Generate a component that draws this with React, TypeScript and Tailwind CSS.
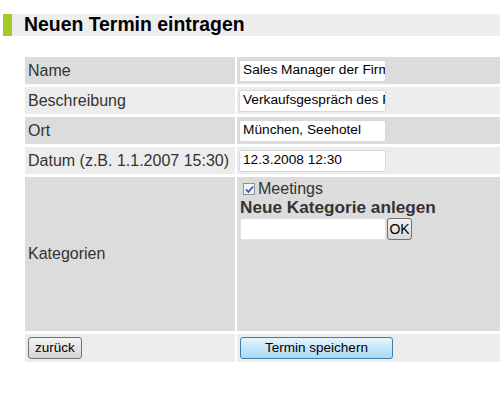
import React from "react";

const label = "flex items-center pl-[3px] text-[16px] text-[#333333] [font-family:'Liberation_Sans',Arial,sans-serif] whitespace-nowrap";
const inputCls = "w-[147px] h-[22px] bg-white border border-[#d8d8d8] rounded-[2px] px-[3px] text-[13.7px] text-black [font-family:'Liberation_Sans',Arial,sans-serif] flex items-center overflow-hidden whitespace-nowrap";

function Input({ value }: { value: string }) {
  return <div className={inputCls}>{value}</div>;
}

export default function App() {
  return (
    <div className="w-[500px] h-[400px] bg-white overflow-hidden relative">
      <div className="mt-[14px] ml-[3px] flex h-[22px]">
        <div className="w-[9px] bg-[#a5c927]" />
        <div className="flex-1 bg-[#eeeeee] flex items-center pl-[12px] text-[19.4px] font-bold text-black [font-family:'Liberation_Sans',Arial,sans-serif]">
          Neuen Termin eintragen
        </div>
      </div>
      <div className="ml-[25px] mt-[21px] grid grid-cols-[210px_1fr] gap-x-[2px] gap-y-[3px]">
        <div className={`${label} h-[27px] bg-[#dcdcdc]`}>Name</div>
        <div className="h-[27px] bg-[#dcdcdc] flex items-center pl-[2px]"><Input value="Sales Manager der Firma" /></div>
        <div className={`${label} h-[27px] bg-[#ececec]`}>Beschreibung</div>
        <div className="h-[27px] bg-[#ececec] flex items-center pl-[2px]"><Input value="Verkaufsgespräch des Projekts" /></div>
        <div className={`${label} h-[27px] bg-[#dcdcdc]`}>Ort</div>
        <div className="h-[27px] bg-[#dcdcdc] flex items-center pl-[2px]"><Input value="München, Seehotel" /></div>
        <div className={`${label} h-[27px] bg-[#ececec]`}>Datum (z.B. 1.1.2007 15:30)</div>
        <div className="h-[27px] bg-[#ececec] flex items-center pl-[2px]"><Input value="12.3.2008 12:30" /></div>
        <div className={`${label} h-[154px] bg-[#dcdcdc]`}>Kategorien</div>
        <div className="h-[154px] bg-[#dcdcdc] pl-[3px] pt-[4px]">
          <div className="flex items-center h-[16px] pl-[3px]">
            <span className="w-[12px] h-[12px] border border-[#8a8f9a] bg-[#f4f4f4] flex items-center justify-center">
              <svg width="9" height="9" viewBox="0 0 9 9">
                <path d="M1 4.5 L3.5 7 L8 1.5" fill="none" stroke="#3a57b0" strokeWidth="1.8" />
              </svg>
            </span>
            <span className="ml-[3px] text-[16px] text-[#333333] [font-family:'Liberation_Sans',Arial,sans-serif]">Meetings</span>
          </div>
          <div className="mt-[1px] h-[19px] flex items-center text-[17.2px] font-bold text-[#333333] [font-family:'Liberation_Sans',Arial,sans-serif] whitespace-nowrap">
            Neue Kategorie anlegen
          </div>
          <div className="flex items-center mt-[1px]">
            <div className="w-[146px] h-[22px] bg-white border border-[#e2e2e2] rounded-[2px]" />
            <div className="ml-[1px] w-[25px] h-[22px] border border-[#707070] rounded-[3px] bg-gradient-to-b from-[#f2f2f2] to-[#d8d8d8] flex items-center justify-center text-[14px] text-black [font-family:'Liberation_Sans',Arial,sans-serif]">OK</div>
          </div>
        </div>
        <div className="h-[28px] bg-[#ececec] flex items-center pl-[3px]">
          <div className="w-[54px] h-[22px] border border-[#707070] rounded-[3px] bg-gradient-to-b from-[#f2f2f2] to-[#d6d6d6] flex items-center justify-center text-[13.5px] text-black [font-family:'Liberation_Sans',Arial,sans-serif]">zurück</div>
        </div>
        <div className="h-[28px] bg-[#ececec] flex items-center pl-[3px]">
          <div className="w-[153px] h-[22px] border border-[#3c7fb1] rounded-[3px] bg-gradient-to-b from-[#e5f4fc] to-[#a9d9f4] flex items-center justify-center text-[13.5px] text-black [font-family:'Liberation_Sans',Arial,sans-serif]">Termin speichern</div>
        </div>
      </div>
    </div>
  );
}
